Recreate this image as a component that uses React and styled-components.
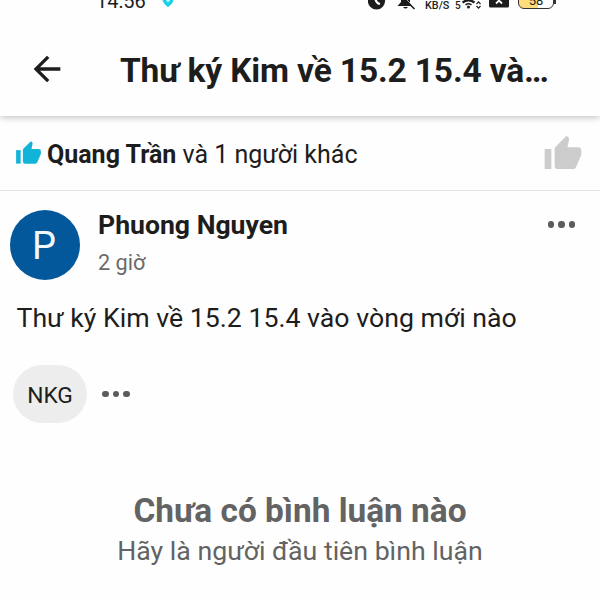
import React from 'react';
import styled, { createGlobalStyle } from 'styled-components';

const GlobalStyle = createGlobalStyle`
  * {
    box-sizing: border-box;
  }

  body {
    margin: 0;
    background: #fefefe;
    color: #1d1d1d;
    font-family: Roboto, sans-serif;
    overflow: hidden;
  }

  svg {
    display: block;
    flex: none;
  }
`;

const Screen = styled.div`
  width: 600px;
  height: 600px;
  overflow: hidden;
`;

const StatusBar = styled.div`
  display: flex;
  align-items: flex-end;
  height: 11px;
  padding-left: 96px;
`;

const Clock = styled.span`
  width: 66px;
  font-size: 20px;
  line-height: 20px;
`;

const StatusIcons = styled.div`
  display: flex;
  align-items: flex-end;
  margin-left: auto;
  width: 232px;
  height: 11px;
`;

const Speed = styled.div`
  width: 24px;
  margin: 0 5px 0 9px;
  font-size: 10.8px;
  font-weight: 500;
  line-height: 11px;
  white-space: nowrap;
`;

const Signal = styled.span`
  width: 7px;
  margin-left: 1px;
  font-size: 10px;
  font-weight: 500;
  line-height: 11px;
`;

const Battery = styled.div`
  display: flex;
  align-items: flex-end;
  justify-content: center;
  width: 36px;
  height: 18px;
  margin: 0 0 2px 9px;
  padding-bottom: 1px;
  border: 1.5px solid #333;
  border-radius: 6px;
  background: linear-gradient(to right, #ffdc7c 55%, #fff 55%);
  font-size: 13px;
  line-height: 13px;
`;

const BatteryTip = styled.div`
  width: 2px;
  height: 7px;
  margin-bottom: 7px;
  background: #333;
`;

const Header = styled.header`
  display: flex;
  align-items: center;
  height: 105px;
  padding: 11px 40px 0 27px;
  background: #fefefe;
  box-shadow: 0 1px 7px rgba(0, 0, 0, 0.28);
  clip-path: inset(0 0 -12px 0);
`;

const Title = styled.h1`
  margin: 4px 0 0 53px;
  font-size: 33.5px;
  font-weight: 700;
  letter-spacing: -0.15px;
  line-height: 44px;
  white-space: nowrap;
`;

const Reactions = styled.div`
  display: flex;
  align-items: center;
  justify-content: space-between;
  height: 75px;
  padding: 1px 17px 0 15px;
  border-bottom: 1px solid #e4e4e4;
`;

const Likers = styled.div`
  display: flex;
  align-items: center;
  gap: 5px;
  font-size: 25px;
  line-height: 32px;

  span {
    padding-top: 2px;
  }
`;

const Author = styled.div`
  display: flex;
  align-items: center;
  height: 107px;
  padding: 1px 25px 0 10px;
`;

const Avatar = styled.div`
  display: flex;
  align-items: center;
  justify-content: center;
  width: 70px;
  height: 70px;
  padding: 2px 2px 0 0;
  border-radius: 50%;
  background: #03579b;
  color: #f2f7fb;
  font-size: 38px;
`;

const AuthorInfo = styled.div`
  flex: 1;
  margin: -1px 0 0 18px;
`;

const Name = styled.div`
  font-size: 26.6px;
  font-weight: 700;
  line-height: 36px;
`;

const Time = styled.div`
  color: #6b6b6b;
  font-size: 21.7px;
  line-height: 40px;
`;

const Message = styled.p`
  margin: 0;
  padding: 0 16.5px;
  font-size: 26.7px;
  line-height: 40px;
`;

const Tags = styled.div`
  display: flex;
  align-items: center;
  gap: 15px;
  height: 58px;
  margin: 27px 0 0 13px;
`;

const Tag = styled.span`
  display: flex;
  align-items: center;
  justify-content: center;
  width: 74px;
  height: 58px;
  padding-top: 2px;
  border-radius: 29px;
  background: #ededed;
  font-size: 22.8px;
`;

const Dots = styled.div`
  display: flex;
  gap: 4px;
  margin-top: ${({ $offset }) => $offset || 0}px;

  i {
    width: 6.5px;
    height: 6.5px;
    border-radius: 50%;
    background: #5c5c5c;
  }
`;

const Empty = styled.div`
  margin-top: 68px;
  color: #636363;
  text-align: center;
`;

const EmptyTitle = styled.div`
  font-size: 33.4px;
  font-weight: 700;
  line-height: 40px;
`;

const EmptyHint = styled.div`
  font-size: 26.7px;
  line-height: 40px;
`;

const ThumbIcon = ({ size, color }) => (
  <svg width={size} height={size} viewBox="0 0 24 24" fill={color}>
    <path d="M23 10.200L22.600 8.400Q22.200 8 21 8h-6.320l.96-4.570c.02-.1.03-.21.03-.32 0-.41-.17-.79-.44-1.060L14.170 1 7.590 7.580C7.220 7.950 7 8.450 7 9v10a2 2 0 0 0 2 2h9c.83 0 1.540-.5 1.840-1.220l3.020-7.050c.09-.23.14-.47.14-.73z" />
    <path d="M1 21h4V9H1z" />
  </svg>
);

const ArrowIcon = () => (
  <svg width="40" height="40" viewBox="0 0 24 24" fill="#1d1d1d">
    <path d="M20 11H7.83l5.59-5.59L12 4l-8 8 8 8 1.41-1.41L7.83 13H20v-2z" />
  </svg>
);

// alarm clock and muted bell
const AlertIcons = () => (
  <svg width="48" height="11" viewBox="0 0 48 11">
    <circle cx="8.5" cy="1" r="8.6" fill="#1d1d1d" />
    <path d="M7.5-2q0 5 4.5 6" fill="none" stroke="#fff" strokeWidth="2.2" />
    <path d="M29.5 6l3.500-4V-2h9v5l2 3zM35 7h5q-2.500 3-5 0" fill="#1d1d1d" />
    <path d="M35.800-3l12 12" stroke="#fefefe" strokeWidth="1" />
    <path d="M34.500-3l12 12" stroke="#1d1d1d" strokeWidth="1.600" />
  </svg>
);

const WifiIcon = () => (
  <svg width="20" height="11" viewBox="0 0 20 11" fill="none" stroke="#1d1d1d">
    <path d="M.5 2.500q6-4.500 12 0" strokeWidth="2.200" />
    <path d="M3.500 4.800q3-2 6 0" strokeWidth="1.500" />
    <circle cx="6.500" cy="7" r="1.500" fill="#1d1d1d" stroke="none" />
    <path d="M14.500 4l2-2.200 2 2.200M14.500 6l2 2.200 2-2.200" strokeWidth="1.200" />
  </svg>
);

const SimIcon = () => (
  <svg width="27" height="11" viewBox="-7 0 27 11">
    <path d="M0 0h20v6q0 1.500-1.500 1.500h-17Q0 7.500 0 6z" fill="#1d1d1d" />
    <path d="M7 3.500l6-6M7-2.500l6 6" stroke="#fff" strokeWidth="1.800" />
  </svg>
);

const More = ({ offset }) => (
  <Dots $offset={offset}>
    <i />
    <i />
    <i />
  </Dots>
);

const App = () => (
  <Screen>
    <GlobalStyle />
    <StatusBar>
      <Clock>14:56</Clock>
      <svg width="12" height="11" viewBox="0 0 12 11">
        <path d="M.5 0h11q-1 4-5.500 7Q1.500 4 .5 0z" fill="#18d3e5" />
        <path d="M4 0h4L6 2.500z" fill="#d9fbff" />
      </svg>
      <StatusIcons>
        <AlertIcons />
        <Speed>KB/S</Speed>
        <Signal>5</Signal>
        <WifiIcon />
        <SimIcon />
        <Battery>58</Battery>
        <BatteryTip />
      </StatusIcons>
    </StatusBar>
    <Header>
      <ArrowIcon />
      <Title>Thư ký Kim về 15.2 15.4 và…</Title>
    </Header>
    <Reactions>
      <Likers>
        <ThumbIcon size={27} color="#12b3d8" />
        <span>
          <b>Quang Trần</b> và 1 người khác
        </span>
      </Likers>
      <ThumbIcon size={40} color="#cccccc" />
    </Reactions>
    <Author>
      <Avatar>P</Avatar>
      <AuthorInfo>
        <Name>Phuong Nguyen</Name>
        <Time>2 giờ</Time>
      </AuthorInfo>
      <More offset={-41} />
    </Author>
    <Message>Thư ký Kim về 15.2 15.4 vào vòng mới nào</Message>
    <Tags>
      <Tag>NKG</Tag>
      <More />
    </Tags>
    <Empty>
      <EmptyTitle>Chưa có bình luận nào</EmptyTitle>
      <EmptyHint>Hãy là người đầu tiên bình luận</EmptyHint>
    </Empty>
  </Screen>
);

export default App;
